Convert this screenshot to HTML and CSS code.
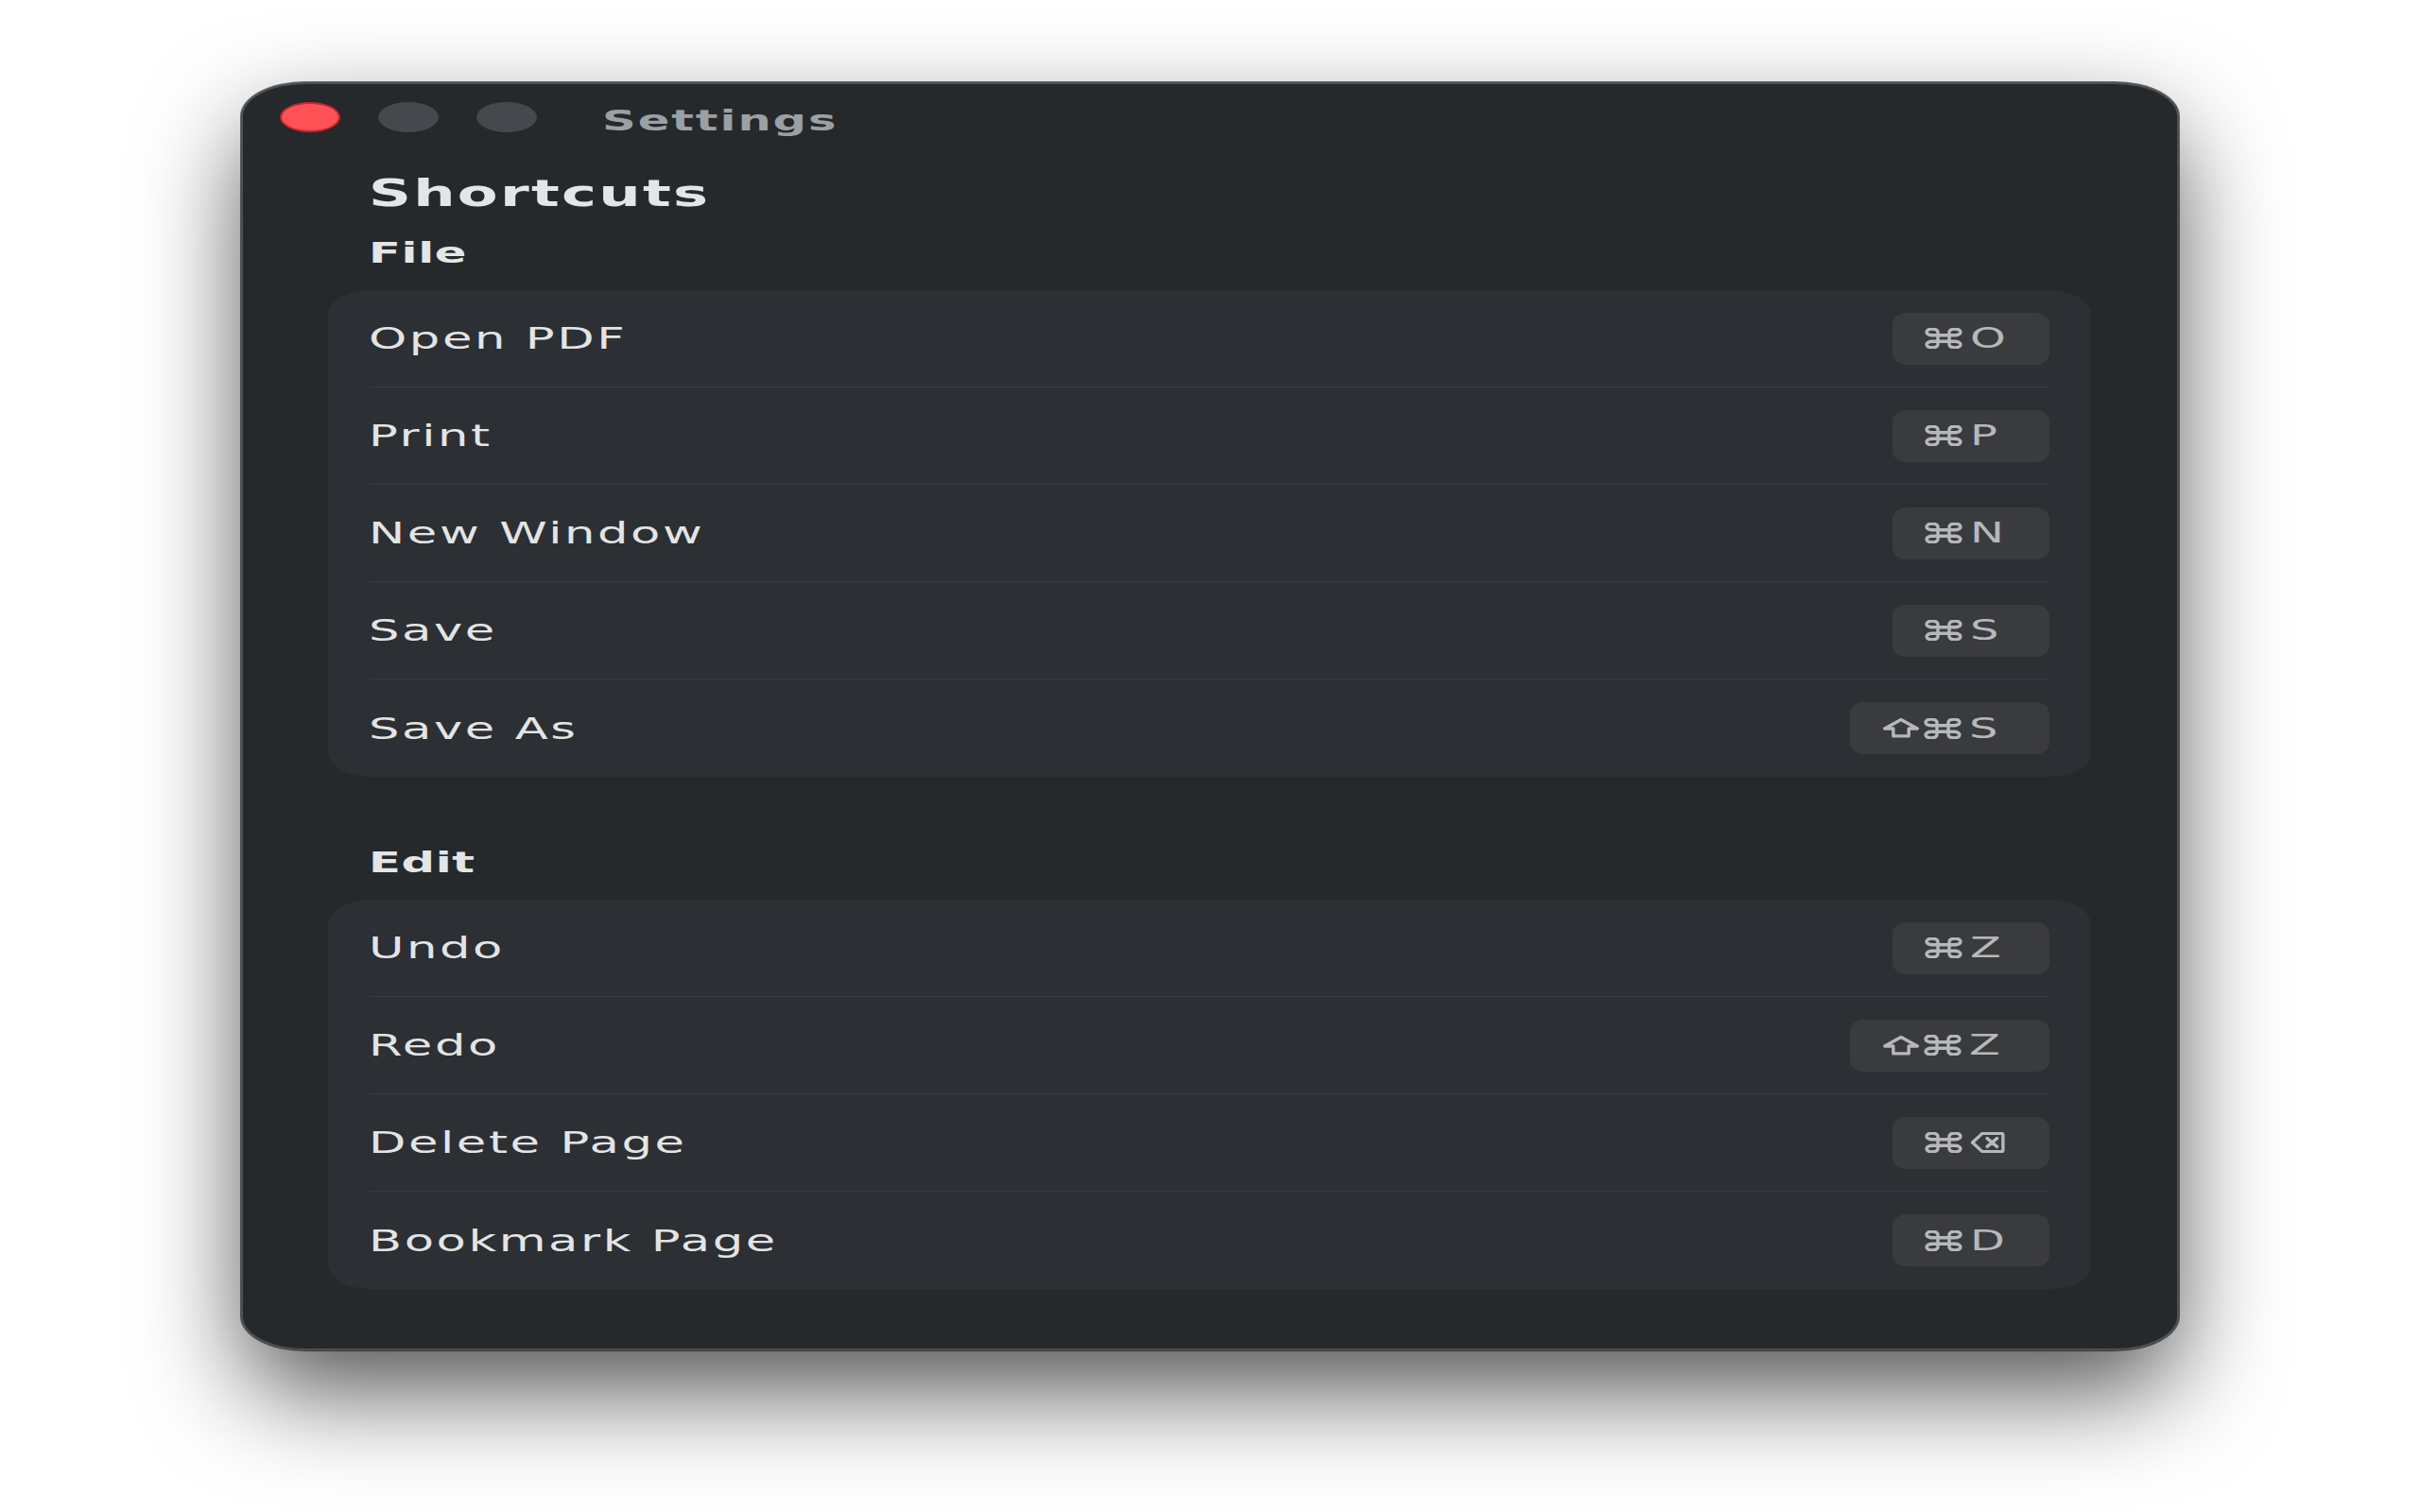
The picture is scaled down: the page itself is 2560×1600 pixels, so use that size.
FILE: index.html
```html
<!DOCTYPE html>
<html lang="en">
<head>
<meta charset="utf-8">
<title>Settings</title>
<link rel="stylesheet" href="styles.css">
</head>
<body>
<div class="window">
  <div class="titlebar">
    <span class="light close"></span>
    <span class="light"></span>
    <span class="light"></span>
    <span class="title">Settings</span>
  </div>
  <div class="content">
    <h1 class="page-title"><span class="wide-text">Shortcuts</span></h1>

    <h2 class="section-title"><span class="wide-text">File</span></h2>
    <div class="group">
      <div class="row"><div class="row-body"><span class="label">Open PDF</span>
        <span class="kbd"><svg class="sym cmd" viewBox="2 2 20 20" preserveAspectRatio="none"><path d="M15 6v12a3 3 0 1 0 3-3H6a3 3 0 1 0 3 3V6a3 3 0 1 0-3 3h12a3 3 0 1 0-3-3"/></svg><span class="key">O</span></span></div></div>
      <div class="row"><div class="row-body"><span class="label">Print</span>
        <span class="kbd"><svg class="sym cmd" viewBox="2 2 20 20" preserveAspectRatio="none"><path d="M15 6v12a3 3 0 1 0 3-3H6a3 3 0 1 0 3 3V6a3 3 0 1 0-3 3h12a3 3 0 1 0-3-3"/></svg><span class="key">P</span></span></div></div>
      <div class="row"><div class="row-body"><span class="label">New Window</span>
        <span class="kbd"><svg class="sym cmd" viewBox="2 2 20 20" preserveAspectRatio="none"><path d="M15 6v12a3 3 0 1 0 3-3H6a3 3 0 1 0 3 3V6a3 3 0 1 0-3 3h12a3 3 0 1 0-3-3"/></svg><span class="key">N</span></span></div></div>
      <div class="row"><div class="row-body"><span class="label">Save</span>
        <span class="kbd"><svg class="sym cmd" viewBox="2 2 20 20" preserveAspectRatio="none"><path d="M15 6v12a3 3 0 1 0 3-3H6a3 3 0 1 0 3 3V6a3 3 0 1 0-3 3h12a3 3 0 1 0-3-3"/></svg><span class="key">S</span></span></div></div>
      <div class="row"><div class="row-body"><span class="label">Save As</span>
        <span class="kbd kbd-wide"><svg class="sym shift" viewBox="1 2 22 20" preserveAspectRatio="none"><path d="M12 3.5 L21.5 12.5 H16.5 V20 H7.5 V12.5 H2.5 Z"/></svg><svg class="sym cmd" viewBox="2 2 20 20" preserveAspectRatio="none"><path d="M15 6v12a3 3 0 1 0 3-3H6a3 3 0 1 0 3 3V6a3 3 0 1 0-3 3h12a3 3 0 1 0-3-3"/></svg><span class="key">S</span></span></div></div>
    </div>

    <h2 class="section-title section-gap"><span class="wide-text">Edit</span></h2>
    <div class="group">
      <div class="row"><div class="row-body"><span class="label">Undo</span>
        <span class="kbd"><svg class="sym cmd" viewBox="2 2 20 20" preserveAspectRatio="none"><path d="M15 6v12a3 3 0 1 0 3-3H6a3 3 0 1 0 3 3V6a3 3 0 1 0-3 3h12a3 3 0 1 0-3-3"/></svg><span class="key">Z</span></span></div></div>
      <div class="row"><div class="row-body"><span class="label">Redo</span>
        <span class="kbd kbd-wide"><svg class="sym shift" viewBox="1 2 22 20" preserveAspectRatio="none"><path d="M12 3.5 L21.5 12.5 H16.5 V20 H7.5 V12.5 H2.5 Z"/></svg><svg class="sym cmd" viewBox="2 2 20 20" preserveAspectRatio="none"><path d="M15 6v12a3 3 0 1 0 3-3H6a3 3 0 1 0 3 3V6a3 3 0 1 0-3 3h12a3 3 0 1 0-3-3"/></svg><span class="key">Z</span></span></div></div>
      <div class="row"><div class="row-body"><span class="label">Delete Page</span>
        <span class="kbd"><svg class="sym cmd" viewBox="2 2 20 20" preserveAspectRatio="none"><path d="M15 6v12a3 3 0 1 0 3-3H6a3 3 0 1 0 3 3V6a3 3 0 1 0-3 3h12a3 3 0 1 0-3-3"/></svg><svg class="sym del" viewBox="1 4 22 16" preserveAspectRatio="none"><path d="M8.5 5 H20 a1.2 1.2 0 0 1 1.2 1.2 V17.8 a1.2 1.2 0 0 1 -1.2 1.2 H8.5 L2.5 12 Z M11.5 8.8 L17.5 15.2 M17.5 8.8 L11.5 15.2"/></svg></span></div></div>
      <div class="row"><div class="row-body"><span class="label">Bookmark Page</span>
        <span class="kbd"><svg class="sym cmd" viewBox="2 2 20 20" preserveAspectRatio="none"><path d="M15 6v12a3 3 0 1 0 3-3H6a3 3 0 1 0 3 3V6a3 3 0 1 0-3 3h12a3 3 0 1 0-3-3"/></svg><span class="key">D</span></span></div></div>
    </div>
  </div>
</div>
</body>
</html>
```

FILE: styles.css
```css
html, body {
  margin: 0;
  padding: 0;
  background: #ffffff;
}

body {
  width: 2560px;
  height: 1600px;
  box-sizing: border-box;
  padding: 87px 0 0 255px;
  overflow: hidden;
}

.window {
  width: 2050px;
  height: 1342px;
  box-sizing: border-box;
  background: #25292c;
  border: 2px solid #4d5154;
  border-radius: 68px / 36px;
  box-shadow: 0 0 0 1px rgba(0, 0, 0, 0.55), 0 45px 110px -5px rgba(0, 0, 0, 0.7);
  font-family: "DejaVu Sans", "Liberation Sans", sans-serif;
}

/* title bar */
.titlebar {
  display: flex;
  align-items: flex-start;
  padding: 19px 0 0 39px;
}

.light {
  flex: none;
  width: 64px;
  height: 32px;
  box-sizing: border-box;
  border-radius: 50%;
  background: #45494d;
  margin-right: 40px;
}

.light.close {
  background: #ff5257;
  border: 2px solid #c7262c;
}

.title {
  display: inline-block;
  margin-left: 29px;
  padding-top: 3px;
  font-size: 31px;
  line-height: 32px;
  font-weight: 700;
  color: #9ba0a4;
  letter-spacing: 1.2px;
  white-space: nowrap;
  transform: scaleX(1.6);
  transform-origin: left center;
}

/* content */
.content {
  padding: 0 91px 0 90px;
}

.wide-text {
  display: inline-block;
  white-space: nowrap;
  transform: scaleX(1.6);
  transform-origin: left center;
}

.page-title {
  margin: 39px 0 0 0;
  padding-left: 43px;
  font-size: 39px;
  line-height: 46px;
  font-weight: 700;
  color: #e4e5e6;
  letter-spacing: 1.4px;
}

.section-title {
  margin: 21px 0 0 0;
  padding-left: 43px;
  font-size: 31px;
  line-height: 36px;
  font-weight: 700;
  color: #e4e5e6;
  letter-spacing: 0.4px;
}

.section-title.section-gap {
  margin-top: 72px;
}

.group {
  margin-top: 22px;
  background: #2c2f33;
  border-radius: 44px / 26px;
}

.row {
  height: 103px;
  box-sizing: border-box;
  padding: 0 44px;
  display: flex;
}

.row-body {
  flex: 1;
  display: flex;
  align-items: center;
  justify-content: space-between;
  border-bottom: 1px solid #383b3f;
}

.row:last-child .row-body {
  border-bottom: none;
}

.label {
  display: inline-block;
  margin-left: -1px;
  font-size: 32px;
  line-height: 40px;
  color: #e3e4e5;
  letter-spacing: 1.6px;
  white-space: nowrap;
  transform: scaleX(1.6);
  transform-origin: left center;
}

/* key caps */
.kbd {
  flex: none;
  width: 166px;
  height: 55px;
  box-sizing: border-box;
  padding-left: 34px;
  border-radius: 14px / 12px;
  background: #3a3b3e;
  display: flex;
  align-items: center;
  justify-content: flex-start;
}

.kbd.kbd-wide {
  width: 211px;
}

.sym {
  flex: none;
  display: block;
  fill: none;
  stroke: #b6b8ba;
  stroke-width: 3.4px;
  stroke-linecap: round;
  stroke-linejoin: round;
}

.sym path {
  vector-effect: non-scaling-stroke;
}

.sym.cmd {
  width: 40px;
  height: 22px;
}

.sym.shift {
  width: 40px;
  height: 21px;
  margin-right: 4px;
}

.sym.del {
  width: 38px;
  height: 22px;
  margin-left: 8px;
}

.key {
  display: inline-block;
  margin-left: 8px;
  font-size: 30px;
  line-height: 30px;
  color: #b6b8ba;
  white-space: nowrap;
  transform: scaleX(1.6);
  transform-origin: left center;
}
```
